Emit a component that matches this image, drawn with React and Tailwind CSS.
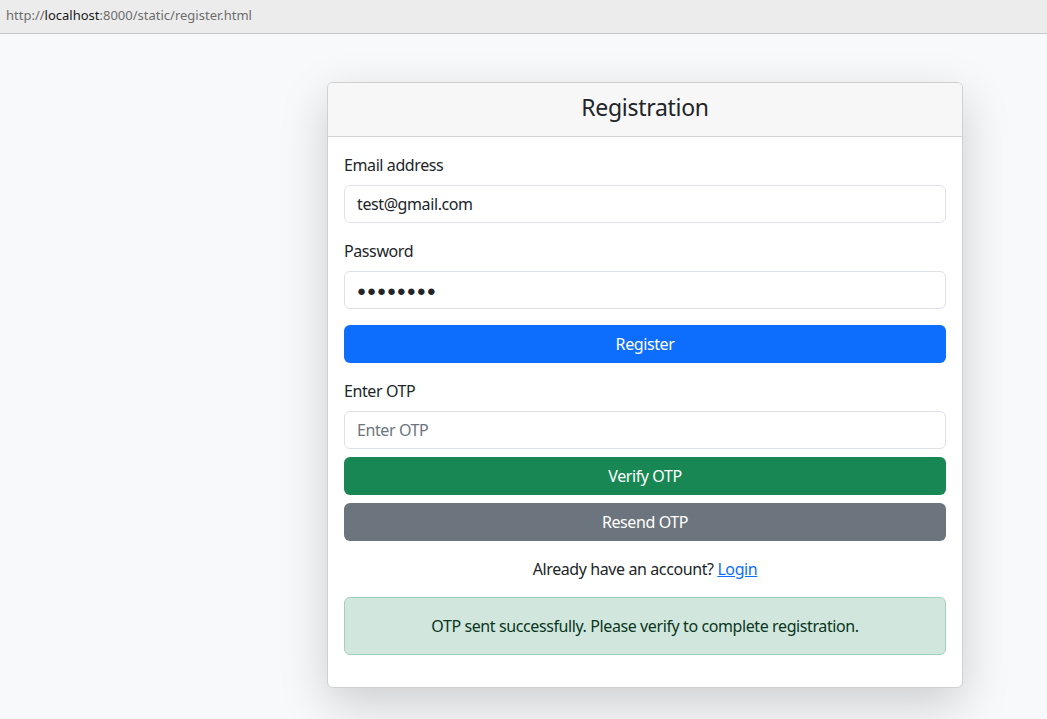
export default function App() {
  const font = { fontFamily: '"Noto Sans", "Open Sans", sans-serif' };
  return (
    <div className="min-h-[719px] bg-[#f8f9fa] text-[#212529]" style={font}>
      <div className="h-[34px] bg-[#ececec] border-b border-[#c8c8c8] flex items-center px-[6px] pb-[2px] text-[13px] text-[#6d6d6d]">
        <span>http://</span>
        <span className="text-[#1a1a1a]">localhost</span>
        <span>:8000/static/register.html</span>
      </div>
      <div className="pt-[48px] pb-[31px] tracking-[-0.4px]">
        <div className="ml-[327px] w-[636px] bg-white border border-[#d0d0d0] rounded-[6px] shadow-[0_16px_48px_rgba(0,0,0,0.175)] overflow-hidden">
          <div className="h-[54px] bg-[#f7f7f7] border-b border-[#d3d3d3] flex items-center justify-center">
            <h4 className="text-[23px] leading-[28px] mb-[6px] tracking-[-0.3px]">Registration</h4>
          </div>
          <div className="p-4">
            <label className="block text-[16px] leading-6 mb-2">Email address</label>
            <div className="h-[38px] border border-[#dee2e6] rounded-[6px] px-3 flex items-center text-[16px] mb-4">test@gmail.com</div>
            <label className="block text-[16px] leading-6 mb-2">Password</label>
            <div className="h-[38px] border border-[#dee2e6] rounded-[6px] px-3 flex items-center text-[15px] tracking-[0.9px] mb-4">●●●●●●●●</div>
            <button className="w-full h-[38px] bg-[#0d6efd] text-white rounded-[6px] text-[16px] mb-4">Register</button>
            <label className="block text-[16px] leading-6 mb-2">Enter OTP</label>
            <div className="h-[38px] border border-[#dee2e6] rounded-[6px] px-3 flex items-center text-[16px] text-[#6c757d] mb-2">Enter OTP</div>
            <button className="w-full h-[38px] bg-[#198754] text-white rounded-[6px] text-[16px] mb-2 block">Verify OTP</button>
            <button className="w-full h-[38px] bg-[#6c757d] text-white rounded-[6px] text-[16px] block">Resend OTP</button>
            <p className="text-center text-[16px] leading-6 mt-4">
              Already have an account? <a className="text-[#0d6efd] underline" href="#">Login</a>
            </p>
            <div className="mt-4 mb-4 bg-[#d1e7dd] border border-[#a3cfbb] rounded-[6px] text-[#0a3622] text-center text-[16px] leading-6 py-4">
              OTP sent successfully. Please verify to complete registration.
            </div>
          </div>
        </div>
      </div>
    </div>
  );
}
